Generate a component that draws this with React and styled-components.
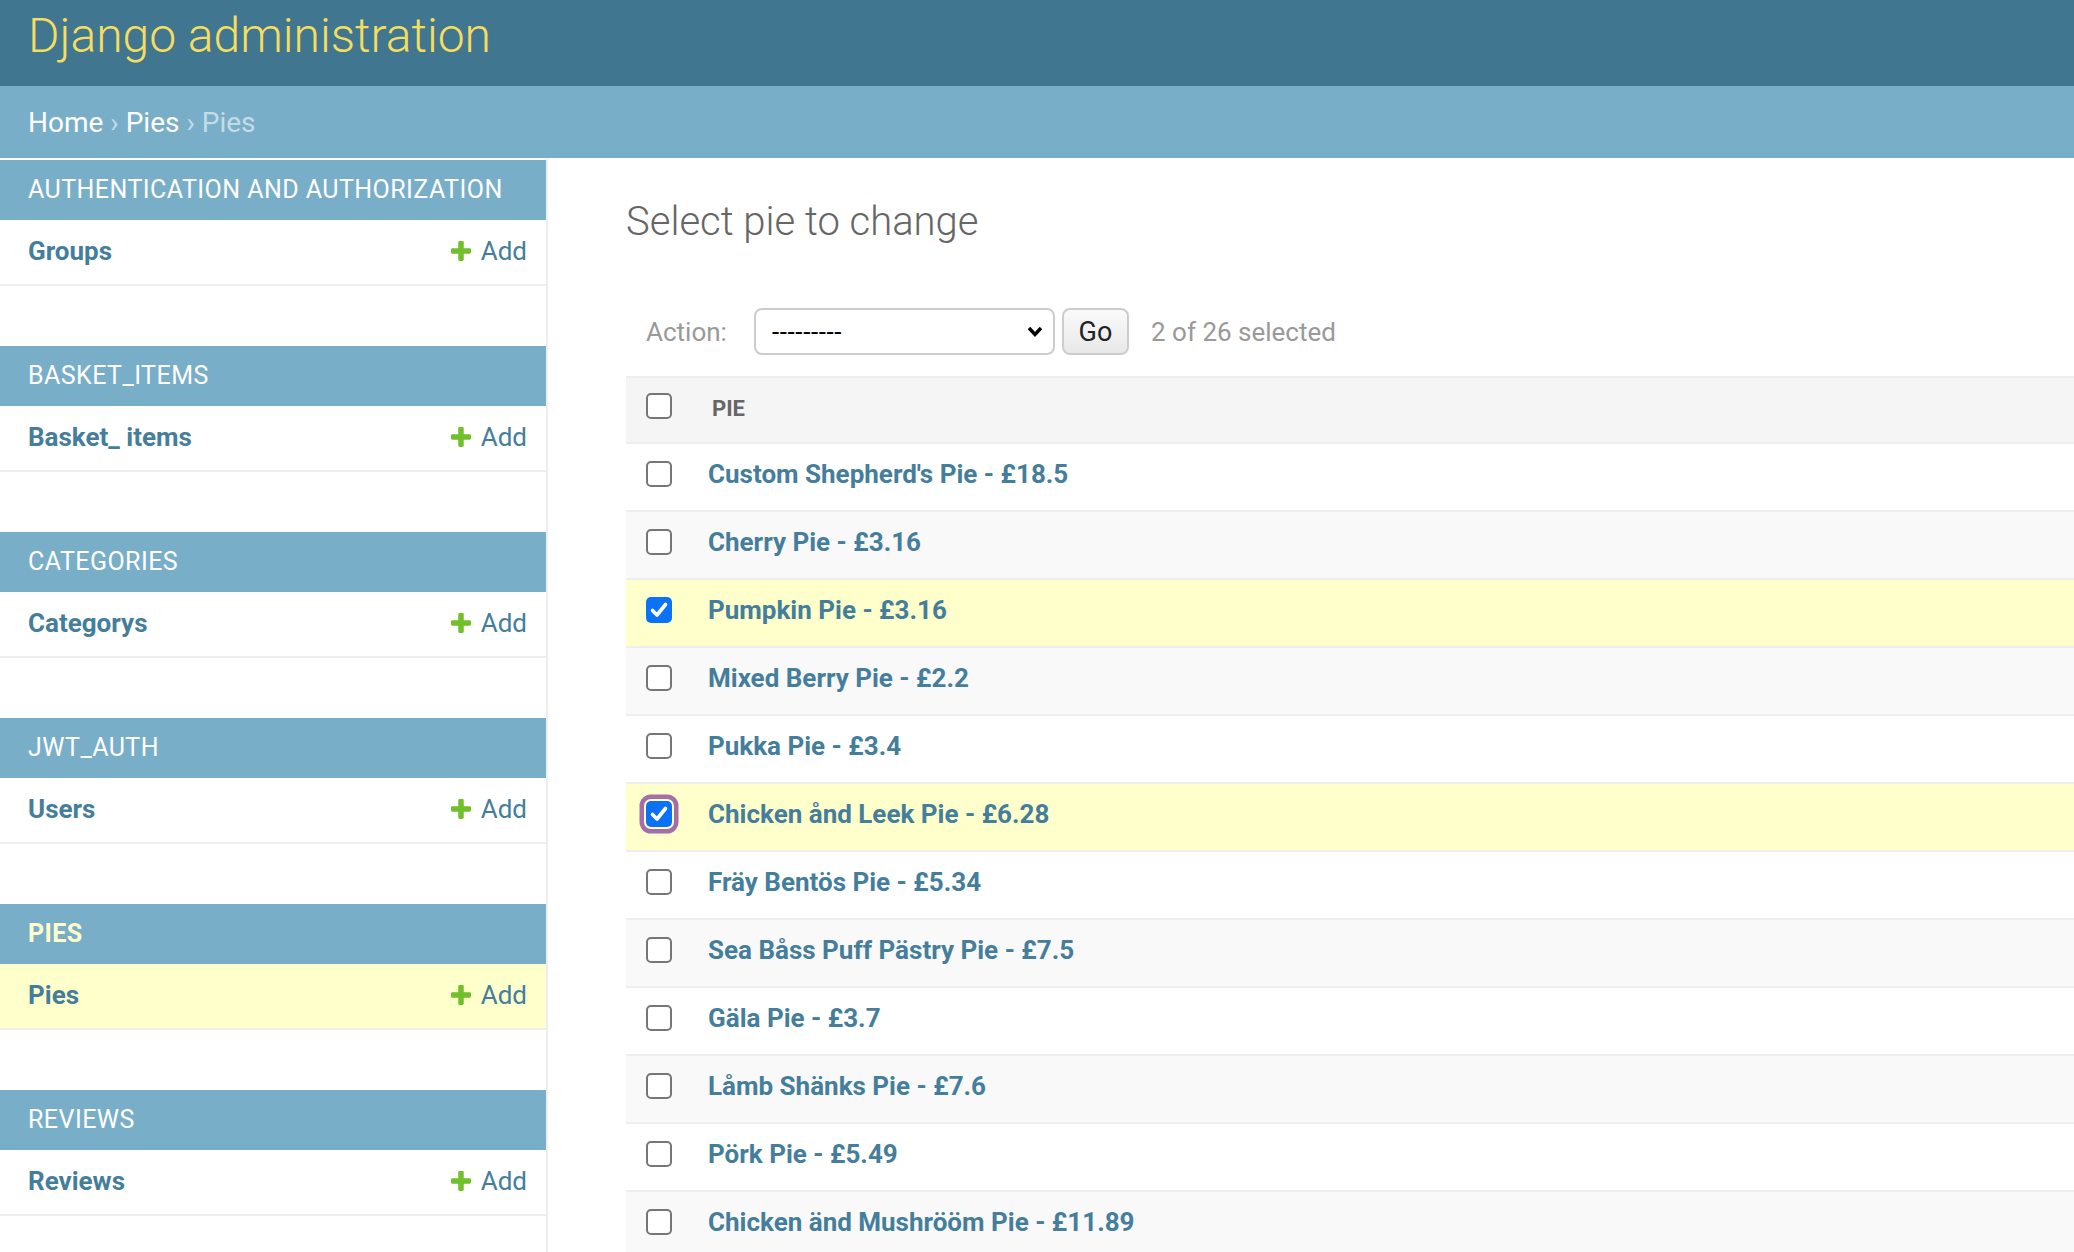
import React from "react";
import styled, { createGlobalStyle } from "styled-components";

const GlobalStyle = createGlobalStyle`
  html, body { margin: 0; padding: 0; }
  body {
    font-family: Roboto, "Liberation Sans", Arial, sans-serif;
    color: #333;
    background: #fff;
    overflow: hidden;
  }
  * { box-sizing: border-box; }
`;

const Page = styled.div`
  display: flex;
  flex-direction: column;
  height: 1252px;
  overflow: hidden;
`;

const Header = styled.header`
  flex: none;
  display: flex;
  align-items: flex-start;
  height: 86px;
  padding: 8px 28px 0;
  background: #417690;
`;

const Branding = styled.h1`
  margin: 0;
  font-size: 48px;
  line-height: 56px;
  font-weight: 300;
  color: #f5dd5d;
`;

const Breadcrumbs = styled.nav`
  flex: none;
  display: flex;
  align-items: center;
  height: 72px;
  padding: 0 28px;
  background: #79aec8;
  font-size: 28px;
  color: #c4dce8;
  white-space: pre;
`;

const Crumb = styled.a`
  color: #fff;
  text-decoration: none;
`;

const Sep = styled.span`
  color: #c4dce8;
  font-size: 28px;
`;

const Main = styled.div`
  flex: 1;
  display: flex;
  min-height: 0;
`;

const Sidebar = styled.aside`
  flex: none;
  width: 548px;
  padding-top: 2px;
  border-right: 2px solid #eee;
`;

const Module = styled.section`
  margin-bottom: 60px;
`;

const Caption = styled.div`
  display: flex;
  align-items: center;
  height: 60px;
  padding: 0 28px 1px;
  background: #79aec8;
  color: ${(p) => (p.$current ? "#ffc" : "#fff")};
  font-weight: ${(p) => (p.$current ? 700 : 400)};
  font-size: 25px;
  letter-spacing: 0.45px;
  text-transform: uppercase;
  white-space: nowrap;
`;

const ModelRow = styled.div`
  display: flex;
  align-items: center;
  justify-content: space-between;
  height: 66px;
  padding: 0 19px 3px 28px;
  border-bottom: 2px solid #eee;
  background: ${(p) => (p.$current ? "#ffc" : "#fff")};
`;

const ModelLink = styled.a`
  color: #447e9b;
  font-weight: 700;
  font-size: 26px;
  text-decoration: none;
`;

const AddLink = styled.a`
  display: flex;
  align-items: center;
  gap: 10px;
  color: #447e9b;
  font-size: 26px;
  text-decoration: none;
`;

const PlusSvg = styled.svg`
  width: 20px;
  height: 20px;
  display: block;
  margin-top: 1px;
`;

const PlusIcon = () => (
  <PlusSvg viewBox="192 192 1408 1408">
    <path
      fill="#70bf2b"
      d="M1600 796v192q0 40-28 68t-68 28h-416v416q0 40-28 68t-68 28h-192q-40 0-68-28t-28-68v-416h-416q-40 0-68-28t-28-68v-192q0-40 28-68t68-28h416v-416q0-40 28-68t68-28h192q40 0 68 28t28 68v416h416q40 0 68 28t28 68z"
    />
  </PlusSvg>
);

const Content = styled.main`
  flex: 1;
  min-width: 0;
  padding: 40px 0 0 78px;
`;

const Title = styled.h1`
  margin: 0 0 46px;
  font-size: 40px;
  line-height: 47px;
  font-weight: 300;
  color: #666;
`;

const Actions = styled.div`
  display: flex;
  align-items: center;
  height: 85px;
  padding: 0 20px 4px;
  color: #999;
  font-size: 26px;
`;

const ActionLabel = styled.label`
  width: 108px;
`;

const Select = styled.div`
  display: flex;
  align-items: center;
  justify-content: space-between;
  width: 301px;
  height: 47px;
  padding: 0 10px 0 16px;
  border: 2px solid #ccc;
  border-radius: 8px;
  background: #fff;
  color: #000;
  font-size: 26px;
  letter-spacing: 0.6px;
`;

const ChevronSvg = styled.svg`
  width: 16px;
  height: 11px;
  display: block;
`;

const Chevron = () => (
  <ChevronSvg viewBox="0 0 16 11">
    <polyline points="2,2 8,8.5 14,2" fill="none" stroke="#000" strokeWidth="3.4" />
  </ChevronSvg>
);

const GoButton = styled.button`
  width: 67px;
  height: 47px;
  margin-left: 7px;
  border: 2px solid #ccc;
  border-radius: 8px;
  background: linear-gradient(#fafafa, #e8e8e8);
  color: #222;
  font-family: inherit;
  font-size: 27px;
  padding: 0;
`;

const Counter = styled.span`
  margin-left: 22px;
`;

const Table = styled.div`
  border-top: 2px solid #eee;
`;

const HeadRow = styled.div`
  display: flex;
  align-items: center;
  height: 66px;
  padding-bottom: 8px;
  background: #f5f5f5;
  border-bottom: 2px solid #eee;
`;

const Row = styled.div`
  display: flex;
  align-items: center;
  height: 68px;
  padding-bottom: 7px;
  border-bottom: 2px solid #eee;
  background: ${(p) => (p.$selected ? "#ffc" : p.$odd ? "#f9f9f9" : "#fff")};
`;

const CheckCell = styled.div`
  flex: none;
  width: 82px;
  padding-left: 20px;
  display: flex;
  align-items: center;
`;

const Box = styled.span`
  display: flex;
  align-items: center;
  justify-content: center;
  width: 26px;
  height: 26px;
  border-radius: 5px;
  border: ${(p) => (p.$checked ? "none" : "2px solid #767676")};
  background: ${(p) => (p.$checked ? "#0b72f5" : "#fff")};
  box-shadow: ${(p) => (p.$focused ? "0 0 0 2px #ffc, 0 0 0 6.5px #a66da8" : "none")};
`;

const CheckSvg = styled.svg`
  width: 20px;
  height: 20px;
  display: block;
`;

const CheckBox = ({ checked, focused }) => (
  <Box role="checkbox" aria-checked={!!checked} $checked={checked} $focused={focused}>
    {checked && (
      <CheckSvg viewBox="0 0 20 20">
        <polyline
          points="3.5,10.5 8,15 16.5,4.5"
          fill="none"
          stroke="#fff"
          strokeWidth="3.6"
          strokeLinecap="round"
          strokeLinejoin="round"
        />
      </CheckSvg>
    )}
  </Box>
);

const HeadLabel = styled.span`
  padding: 4px 0 0 4px;
  color: #666;
  font-weight: 700;
  font-size: 22px;
  text-transform: uppercase;
`;

const PieLink = styled.a`
  color: #447e9b;
  font-weight: 700;
  font-size: 26px;
  text-decoration: none;
`;

const apps = [
  { name: "Authentication and Authorization", model: "Groups" },
  { name: "Basket_items", model: "Basket_ items" },
  { name: "Categories", model: "Categorys" },
  { name: "Jwt_auth", model: "Users" },
  { name: "Pies", model: "Pies", current: true },
  { name: "Reviews", model: "Reviews" },
];

const pies = [
  { name: "Custom Shepherd's Pie - £18.5" },
  { name: "Cherry Pie - £3.16" },
  { name: "Pumpkin Pie - £3.16", checked: true },
  { name: "Mixed Berry Pie - £2.2" },
  { name: "Pukka Pie - £3.4" },
  { name: "Chicken ånd Leek Pie - £6.28", checked: true, focused: true },
  { name: "Fräy Bentös Pie - £5.34" },
  { name: "Sea Båss Puff Pästry Pie - £7.5" },
  { name: "Gäla Pie - £3.7" },
  { name: "Låmb Shänks Pie - £7.6" },
  { name: "Pörk Pie - £5.49" },
  { name: "Chicken änd Mushrööm Pie - £11.89" },
];

export default function App() {
  return (
    <>
      <GlobalStyle />
      <Page>
        <Header>
          <Branding>Django administration</Branding>
        </Header>
        <Breadcrumbs>
          <Crumb href="#">Home</Crumb>
          <Sep> › </Sep>
          <Crumb href="#">Pies</Crumb>
          <Sep> › </Sep>
          <span>Pies</span>
        </Breadcrumbs>
        <Main>
          <Sidebar>
            {apps.map((app) => (
              <Module key={app.name}>
                <Caption $current={app.current}>{app.name}</Caption>
                <ModelRow $current={app.current}>
                  <ModelLink href="#">{app.model}</ModelLink>
                  <AddLink href="#">
                    <PlusIcon />
                    Add
                  </AddLink>
                </ModelRow>
              </Module>
            ))}
          </Sidebar>
          <Content>
            <Title>Select pie to change</Title>
            <Actions>
              <ActionLabel>Action:</ActionLabel>
              <Select>
                <span>---------</span>
                <Chevron />
              </Select>
              <GoButton>Go</GoButton>
              <Counter>2 of 26 selected</Counter>
            </Actions>
            <Table>
              <HeadRow>
                <CheckCell>
                  <CheckBox />
                </CheckCell>
                <HeadLabel>Pie</HeadLabel>
              </HeadRow>
              {pies.map((pie, i) => (
                <Row key={pie.name} $odd={i % 2 === 1} $selected={pie.checked}>
                  <CheckCell>
                    <CheckBox checked={pie.checked} focused={pie.focused} />
                  </CheckCell>
                  <PieLink href="#">{pie.name}</PieLink>
                </Row>
              ))}
            </Table>
          </Content>
        </Main>
      </Page>
    </>
  );
}
